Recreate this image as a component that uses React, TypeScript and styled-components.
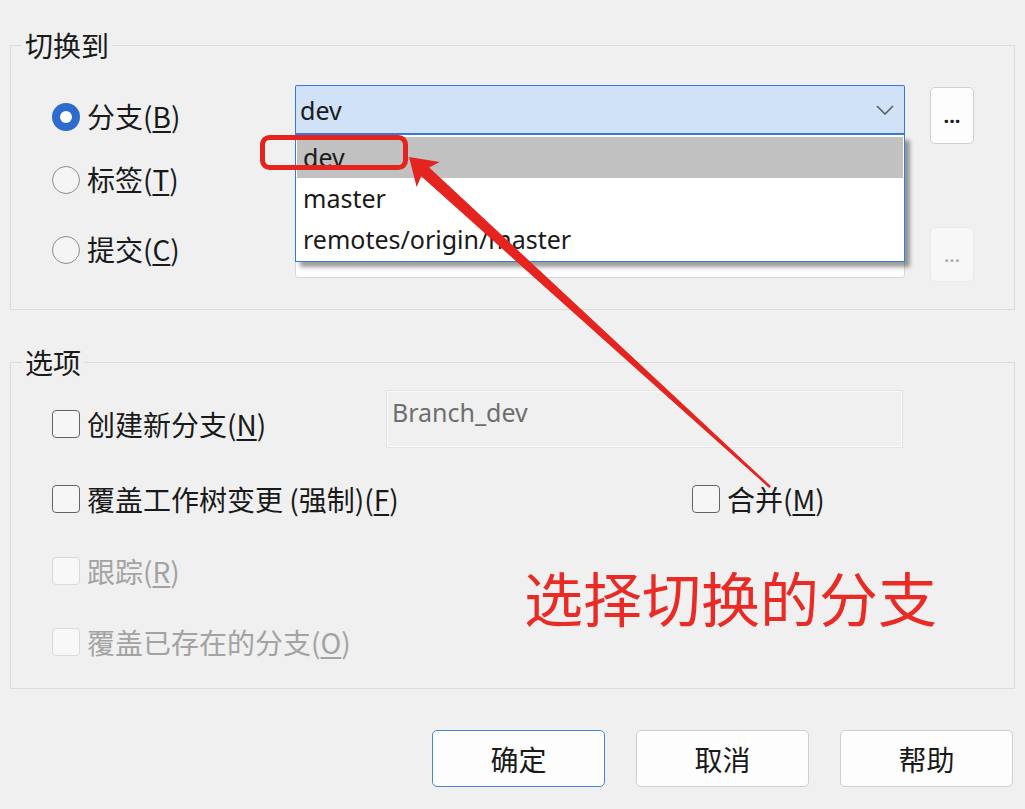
import React from "react";
import styled, { createGlobalStyle, css } from "styled-components";

const GlobalStyle = createGlobalStyle`
  html, body { margin: 0; padding: 0; background: #f0f0f0; }
  body {
    font-family: "Noto Sans CJK SC", "Noto Sans", sans-serif;
    color: #1a1a1a;
  }
  * { box-sizing: border-box; }
`;

const Page = styled.div`
  position: relative;
  width: 1025px;
  height: 809px;
  overflow: hidden;
  padding: 28px 10px 0 10px;
  display: flex;
  flex-direction: column;
`;

const Group = styled.fieldset`
  margin: 0;
  padding: 0;
  border: 1px solid #dcdcdc;
  min-width: 0;
  & + & {
    margin-top: 35px;
  }
`;

const Legend = styled.legend`
  margin-left: 11px;
  padding: 0 3px;
  font-size: 28px;
  line-height: 35px;
`;

const SwitchGrid = styled.div`
  display: grid;
  grid-template-columns: 218px 610px 44px;
  grid-template-rows: 60px 82px 55px;
  column-gap: 25px;
  padding: 22px 0 27px 41px;
`;

const RadioLabel = styled.label<{ $top: number }>`
  display: flex;
  align-items: center;
  gap: 7px;
  align-self: start;
  margin-top: ${(p) => p.$top}px;
  height: 35px;
  font-size: 28px;
  line-height: 35px;
  white-space: nowrap;
`;

const RadioDot = styled.span<{ $checked?: boolean }>`
  position: relative;
  width: 28px;
  height: 28px;
  border-radius: 50%;
  flex: none;
  ${(p) =>
    p.$checked
      ? css`
          background: #2d6bcf;
          &::after {
            content: "";
            position: absolute;
            left: 8px;
            top: 8px;
            width: 12px;
            height: 12px;
            border-radius: 50%;
            background: #ffffff;
          }
        `
      : css`
          background: #f5f5f5;
          border: 1.5px solid #8c8c8c;
        `}
`;

const Key = styled.u`
  text-decoration-thickness: 1.5px;
  text-underline-offset: 3px;
`;

const Combo = styled.div<{ $active?: boolean; $top: number }>`
  position: relative;
  align-self: start;
  margin-top: ${(p) => p.$top}px;
  height: 50px;
  display: flex;
  align-items: center;
  justify-content: space-between;
  padding: 0 10px 0 4px;
  font-family: "Noto Sans", sans-serif;
  font-size: 25px;
  ${(p) =>
    p.$active
      ? css`
          background: #cfe2f7;
          border: 1px solid #3a78d6;
          border-bottom-width: 2px;
          border-radius: 2px 2px 0 0;
        `
      : css`
          background: #fdfdfd;
          border: 1px solid #d6d6d6;
          border-radius: 3px;
        `}
`;

const DropList = styled.ul`
  position: absolute;
  left: -1px;
  right: -1px;
  top: calc(100% + 2px);
  margin: 0;
  padding: 2px 1px 1px;
  list-style: none;
  background: #ffffff;
  border: 1px solid #3a78d6;
  border-top: none;
  box-shadow: 5px 5px 4px rgba(0, 0, 0, 0.38);
  z-index: 2;
`;

const DropItem = styled.li<{ $selected?: boolean }>`
  height: 41px;
  line-height: 41px;
  padding-left: 6px;
  font-family: "Noto Sans", sans-serif;
  font-size: 25px;
  color: #1a1a1a;
  background: ${(p) => (p.$selected ? "#c1c1c1" : "transparent")};
`;

const DotsButton = styled.button<{ $top: number; $h: number }>`
  align-self: start;
  margin-top: ${(p) => p.$top}px;
  width: 44px;
  height: ${(p) => p.$h}px;
  padding: 0;
  display: flex;
  align-items: center;
  justify-content: center;
  background: #fdfdfd;
  border: 1px solid #d0d0d0;
  border-radius: 5px;
  font-family: "Noto Sans", sans-serif;
  font-size: 20px;
  font-weight: 700;
  color: #1a1a1a;
  &:disabled {
    background: #f7f7f7;
    border-color: #e9e9e9;
    color: #a6a6a6;
    font-weight: 400;
  }
`;

const OptionsGrid = styled.div`
  display: grid;
  grid-template-columns: 334px 306px 211px;
  grid-template-rows: 68px 82px 62px 80px;
  align-items: center;
  padding: 10px 0 6px 41px;
`;

const CheckLabel = styled.label<{ $disabled?: boolean; $col?: string; $row: number }>`
  display: flex;
  align-items: center;
  gap: 7px;
  height: 35px;
  font-size: 28px;
  line-height: 35px;
  white-space: nowrap;
  grid-row: ${(p) => p.$row};
  grid-column: ${(p) => p.$col ?? "1"};
  color: ${(p) => (p.$disabled ? "#a3a3a3" : "#1a1a1a")};
`;

const CheckBox = styled.span<{ $disabled?: boolean }>`
  width: 28px;
  height: 28px;
  flex: none;
  border-radius: 4px;
  ${(p) =>
    p.$disabled
      ? css`
          background: #f8f8f8;
          border: 1.5px solid #dadada;
        `
      : css`
          background: #f6f6f6;
          border: 1.5px solid #646464;
        `}
`;

const NameField = styled.div`
  grid-row: 1;
  grid-column: 2 / 4;
  align-self: start;
  height: 58px;
  padding: 4px 5px 0;
  background: #f0f0f0;
  border: 1px solid #e4e4e4;
  box-shadow: inset 0 0 0 1px #fafafa;
  font-family: "Noto Sans", sans-serif;
  font-size: 25px;
  line-height: 35px;
  color: #6e6e6e;
`;

const ButtonBar = styled.div`
  display: flex;
  justify-content: flex-end;
  gap: 31px;
  margin-top: 41px;
  padding-right: 2px;
`;

const DialogButton = styled.button<{ $primary?: boolean }>`
  width: 173px;
  height: 57px;
  background: #fdfdfd;
  border-radius: 5px;
  font-family: "Noto Sans CJK SC", sans-serif;
  font-size: 28px;
  color: #1a1a1a;
  border: ${(p) => (p.$primary ? "1.5px solid #4a86d8" : "1px solid #cfcfcf")};
`;

const Overlay = styled.svg`
  position: absolute;
  left: 0;
  top: 0;
  pointer-events: none;
  z-index: 5;
`;

const Note = styled.div`
  position: absolute;
  left: 524px;
  top: 565px;
  font-family: "Noto Sans CJK SC", sans-serif;
  font-size: 59px;
  line-height: 64px;
  color: #ea2a24;
  white-space: nowrap;
  z-index: 5;
`;

const Chevron = () => (
  <svg width="18" height="10" viewBox="0 0 18 10">
    <polyline points="1,1 9,9 17,1" fill="none" stroke="#5c5c5c" strokeWidth="1.6" />
  </svg>
);

export default function App() {
  return (
    <>
      <GlobalStyle />
      <Page>
        <Group>
          <Legend>切换到</Legend>
          <SwitchGrid>
            <RadioLabel $top={14}>
              <RadioDot $checked />
              <span>
                分支(<Key>B</Key>)
              </span>
            </RadioLabel>
            <Combo $active $top={0}>
              <span>dev</span>
              <Chevron />
              <DropList>
                <DropItem $selected>dev</DropItem>
                <DropItem>master</DropItem>
                <DropItem>remotes/origin/master</DropItem>
              </DropList>
            </Combo>
            <DotsButton $top={2} $h={57}>...</DotsButton>

            <RadioLabel $top={17}>
              <RadioDot />
              <span>
                标签(<Key>T</Key>)
              </span>
            </RadioLabel>
            <Combo $top={10} />
            <span />

            <RadioLabel $top={5}>
              <RadioDot />
              <span>
                提交(<Key>C</Key>)
              </span>
            </RadioLabel>
            <Combo $top={1} />
            <DotsButton $top={0} $h={55} disabled>
              ...
            </DotsButton>
          </SwitchGrid>
        </Group>

        <Group>
          <Legend>选项</Legend>
          <OptionsGrid>
            <CheckLabel $row={1}>
              <CheckBox />
              <span>
                创建新分支(<Key>N</Key>)
              </span>
            </CheckLabel>
            <NameField>Branch_dev</NameField>

            <CheckLabel $row={2} $col="1 / 3">
              <CheckBox />
              <span>
                覆盖工作树变更 (强制)(<Key>F</Key>)
              </span>
            </CheckLabel>
            <CheckLabel $row={2} $col="3">
              <CheckBox />
              <span>
                合并(<Key>M</Key>)
              </span>
            </CheckLabel>

            <CheckLabel $row={3} $disabled>
              <CheckBox $disabled />
              <span>
                跟踪(<Key>R</Key>)
              </span>
            </CheckLabel>

            <CheckLabel $row={4} $col="1 / 3" $disabled>
              <CheckBox $disabled />
              <span>
                覆盖已存在的分支(<Key>O</Key>)
              </span>
            </CheckLabel>
          </OptionsGrid>
        </Group>

        <ButtonBar>
          <DialogButton $primary>确定</DialogButton>
          <DialogButton>取消</DialogButton>
          <DialogButton>帮助</DialogButton>
        </ButtonBar>

        <Overlay width="1025" height="809" viewBox="0 0 1025 809">
          <rect
            x="262.5"
            y="137.5"
            width="143"
            height="30"
            rx="7"
            fill="none"
            stroke="#e5231f"
            strokeWidth="5"
          />
          <polygon
            fill="#e5231f"
            points="409,157 439.7,162.1 429.2,167.5 770.8,486.1 769.2,487.9 421.2,176.3 416.7,187.1"
          />
        </Overlay>
        <Note>选择切换的分支</Note>
      </Page>
    </>
  );
}
